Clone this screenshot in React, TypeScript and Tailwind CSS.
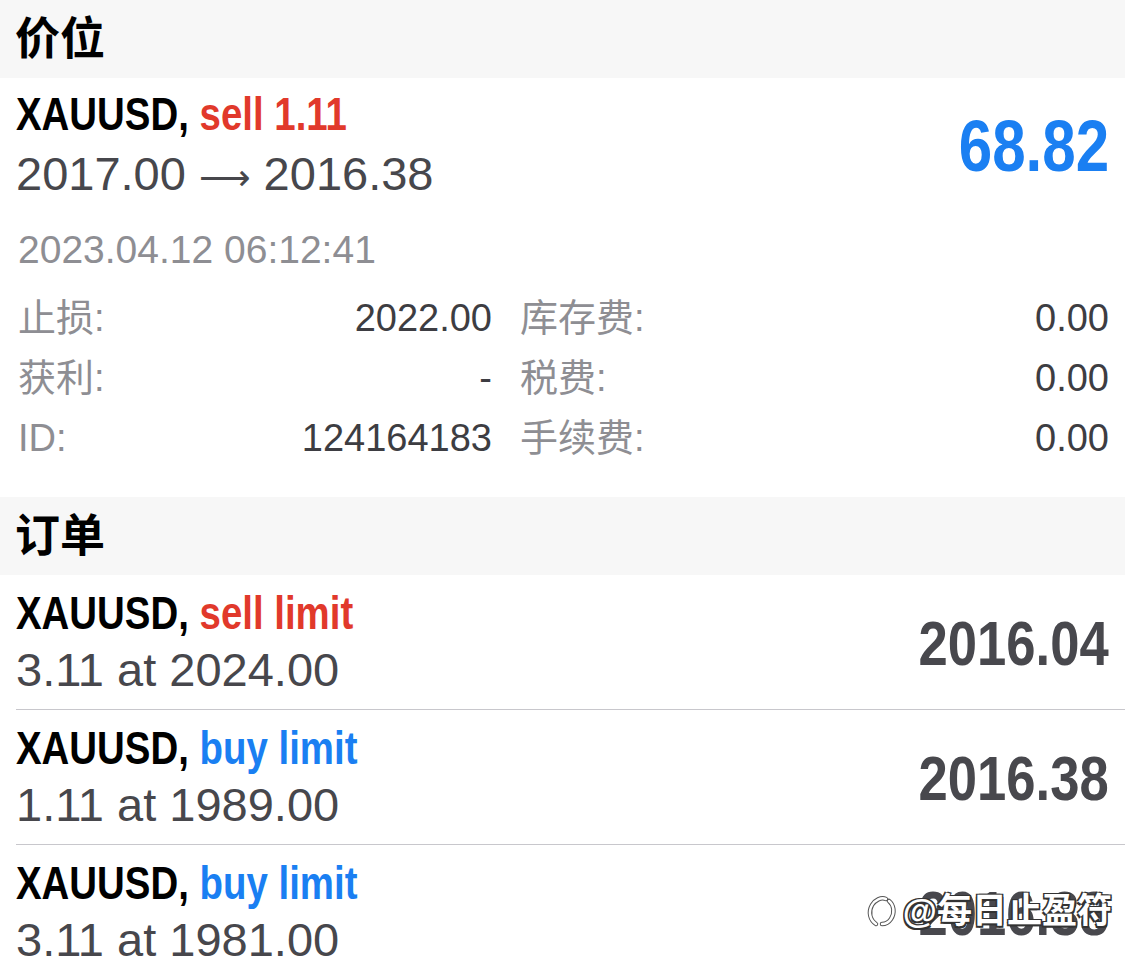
const sans = 'font-["Liberation_Sans","Noto_Sans_CJK_SC",sans-serif]';
const cjk = 'font-["Liberation_Sans","Noto_Sans_CJK_SC",sans-serif]';
// no condensed face is installed, so the bold headline text is squeezed horizontally
const condL = 'inline-block origin-left scale-x-[0.835] whitespace-nowrap font-["Liberation_Sans",sans-serif] font-bold';
const condR = 'inline-block origin-right scale-x-[0.835] whitespace-nowrap font-["Liberation_Sans",sans-serif] font-bold';

type Order = { kind: string; color: string; detail: string; price: string };

const orders: Order[] = [
  { kind: 'sell limit', color: 'text-[#e1392b]', detail: '3.11 at 2024.00', price: '2016.04' },
  { kind: 'buy limit', color: 'text-[#1a7ff2]', detail: '1.11 at 1989.00', price: '2016.38' },
  { kind: 'buy limit', color: 'text-[#1a7ff2]', detail: '3.11 at 1981.00', price: '2016.38' },
];

function SectionHeader({ title }: { title: string }) {
  return (
    <div className="flex h-[78px] items-center bg-[#f7f7f7] pl-[15px]">
      <span className={`${cjk} text-[45px] font-bold leading-none text-black`}>{title}</span>
    </div>
  );
}

function DetailRow({ l1, v1, l2, v2 }: { l1: string; v1: string; l2: string; v2: string }) {
  return (
    <div className={`${sans} flex h-[60px] items-center text-[38px] leading-[60px]`}>
      <span className="w-[110px] pl-[2px] text-[#8e8e93]">{l1}</span>
      <span className="w-[366px] text-right text-[#3d3d42]">{v1}</span>
      <span className="ml-[28px] text-[#8e8e93]">{l2}</span>
      <span className="flex-1 text-right text-[#3d3d42]">{v2}</span>
    </div>
  );
}

function Watermark() {
  return (
    <div className="absolute right-[13px] top-[892px] flex items-center gap-[6px]">
      <svg width="32" height="36" viewBox="0 0 32 36" fill="none" strokeLinecap="round">
        <path d="M11 32c-6-4-8-12-4-19 3-5 9-8 14-6" stroke="#555" strokeWidth="4.5" />
        <path d="M11 32c-6-4-8-12-4-19 3-5 9-8 14-6" stroke="#fff" strokeWidth="2.5" />
        <path d="M24 9c5 4 6 12 2 18-2 3-5 5-9 5" stroke="#555" strokeWidth="4.5" />
        <path d="M24 9c5 4 6 12 2 18-2 3-5 5-9 5" stroke="#fff" strokeWidth="2.5" />
      </svg>
      <span
        className={`${cjk} text-[35px] font-bold leading-none text-white [text-shadow:1.5px_1.5px_0_#333,-1.5px_-1.5px_0_#333,1.5px_-1.5px_0_#333,-1.5px_1.5px_0_#333]`}
      >
        @每日止盈符
      </span>
    </div>
  );
}

export default function App() {
  return (
    <div className="relative h-[967px] w-[1125px] overflow-hidden bg-white">
      <SectionHeader title="价位" />

      <div className="pl-4 pr-4 pt-[6px]">
        <div className="flex items-center justify-between">
          <div>
            <div className="h-[56px] text-[46px] leading-[56px]">
              <span className={condL}>
                <span className="text-black">XAUUSD, </span>
                <span className="text-[#e1392b]">sell 1.11</span>
              </span>
            </div>
            <div className={`${sans} h-[68px] text-[47px] leading-[68px] text-[#47474c]`}>
              2017.00 <span className='font-["DejaVu_Sans",sans-serif] text-[36px] leading-none'>⟶</span> 2016.38
            </div>
          </div>
          <div className="mb-[4px] text-[72px] leading-none text-[#1a7ff2]">
            <span className={condR}>68.82</span>
          </div>
        </div>
        <div className={`${sans} mt-[18px] pl-[2px] text-[39px] leading-[48px] text-[#8e8e93]`}>
          2023.04.12 06:12:41
        </div>
        <div className="mt-[14px] pb-[29px]">
          <DetailRow l1="止损:" v1="2022.00" l2="库存费:" v2="0.00" />
          <DetailRow l1="获利:" v1="-" l2="税费:" v2="0.00" />
          <DetailRow l1="ID:" v1="124164183" l2="手续费:" v2="0.00" />
        </div>
      </div>

      <SectionHeader title="订单" />

      <div className="pl-4">
        {orders.map((o, i) => (
          <div
            key={i}
            className="flex h-[135px] items-center justify-between border-b border-[#c8c7cc] pr-4"
          >
            <div>
              <div className="h-[56px] text-[46px] leading-[56px]">
                <span className={condL}>
                  <span className="text-black">XAUUSD, </span>
                  <span className={o.color}>{o.kind}</span>
                </span>
              </div>
              <div className={`${sans} text-[47px] leading-[62px] text-[#47474c]`}>{o.detail}</div>
            </div>
            <div className="text-[63px] leading-none text-[#48484d]">
              <span className={condR}>{o.price}</span>
            </div>
          </div>
        ))}
      </div>

      <Watermark />
    </div>
  );
}
